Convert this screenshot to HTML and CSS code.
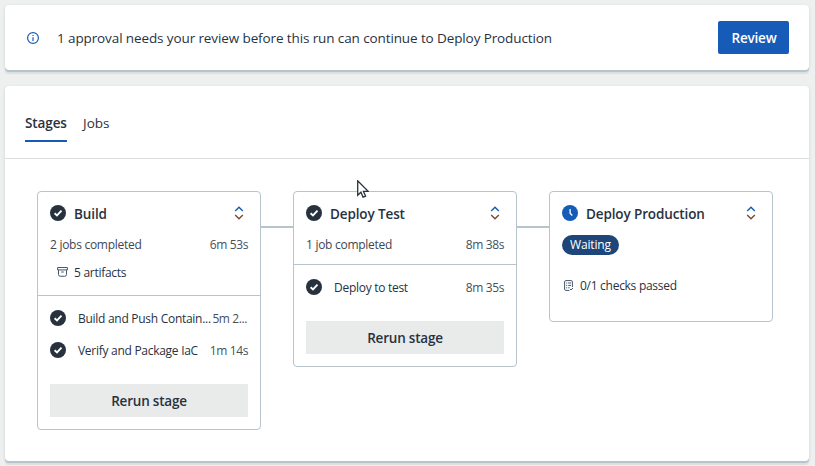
FILE: index.html
```html
<!DOCTYPE html>
<html lang="en">
<head>
<meta charset="utf-8">
<title>Pipeline run</title>
<link rel="stylesheet" href="styles.css">
</head>
<body>
<svg class="defs" width="0" height="0" aria-hidden="true">
  <symbol id="check" viewBox="0 0 16 16"><circle cx="8" cy="8" r="8" fill="#28323f"/><path d="M4.6 8.2 7 10.5 11.5 5.7" fill="none" stroke="#fff" stroke-width="1.9"/></symbol>
  <symbol id="expand" viewBox="0 0 10 14"><path d="M1.2 5 5 1.2 8.8 5" fill="none" stroke="#175bb8" stroke-width="1.4"/><path d="M1.2 9 5 12.8 8.8 9" fill="none" stroke="#7c4a35" stroke-width="1.4"/></symbol>
</svg>
<section class="banner">
  <svg class="info" viewBox="0 0 12 12"><circle cx="6" cy="6" r="5.4" fill="none" stroke="#175bb8" stroke-width="1.2"/><path d="M6 5.2V9M6 3v1.1" stroke="#175bb8" stroke-width="1.2"/></svg>
  <p class="message">1 approval needs your review before this run can continue to Deploy Production</p>
  <button class="review">Review</button>
</section>
<main class="panel">
  <nav class="tabs"><a class="tab active">Stages</a><a class="tab">Jobs</a></nav>
  <div class="stages">
    <article class="card build">
      <header><svg class="status"><use href="#check"/></svg><h2>Build</h2><svg class="toggle"><use href="#expand"/></svg></header>
      <div class="summary"><span class="jobs">2 jobs completed</span><span class="time">6m 53s</span></div>
      <div class="artifacts"><svg viewBox="0 0 12 11"><path d="M.6.6h10.8v2.6H.6zM1.6 3.2v5q0 2 2 2h4.8q2 0 2-2v-5M4.6 5.5h2.8" fill="none" stroke="#46566b" stroke-width="1.1"/></svg><span>5 artifacts</span></div>
      <div class="joblist">
        <div class="job"><svg class="status"><use href="#check"/></svg><span class="name">Build and Push Contain...</span><span class="time cut">5m 2...</span></div>
        <div class="job"><svg class="status"><use href="#check"/></svg><span class="name">Verify and Package IaC</span><span class="time">1m 14s</span></div>
        <button class="rerun">Rerun stage</button>
      </div>
    </article>
    <i class="link"></i>
    <article class="card test">
      <header><svg class="status"><use href="#check"/></svg><h2>Deploy Test</h2><svg class="toggle"><use href="#expand"/></svg></header>
      <div class="summary"><span class="jobs">1 job completed</span><span class="time">8m 38s</span></div>
      <div class="joblist">
        <div class="job"><svg class="status"><use href="#check"/></svg><span class="name">Deploy to test</span><span class="time">8m 35s</span></div>
        <button class="rerun">Rerun stage</button>
      </div>
    </article>
    <i class="link"></i>
    <article class="card production">
      <header><svg class="status" viewBox="0 0 16 16"><circle cx="8" cy="8" r="8" fill="#175bb8"/><path d="M8.1 4v4.3l2.2 2.2" fill="none" stroke="#fff" stroke-width="1.3"/></svg><h2>Deploy Production</h2><svg class="toggle"><use href="#expand"/></svg></header>
      <span class="badge">Waiting</span>
      <div class="checks"><svg viewBox="0 0 10 11"><path d="M8.4 7V1.8Q8.4.6 7.2.6H1.8Q.6.6.6 1.8v7.4q0 1.2 1.2 1.2h3.6M2.2 3h1M4.2 3h2.8M2.2 5.4h1M4.2 5.4h2.8M2.2 7.8h1M4.2 7.8h1.4M6 9l1 1L8.9 8" fill="none" stroke="#46566b" stroke-width="1"/></svg><span>0/1 checks passed</span></div>
    </article>
  </div>
</main>
<svg class="cursor" viewBox="0 0 12 18"><path d="M.7.8v14.4l3.2-3 2.2 5 2.5-1.1-2.2-4.8h4.8z" fill="#fff" stroke="#28323f" stroke-width="1.3"/></svg>
</body>
</html>
```

FILE: styles.css
```css
* { box-sizing: border-box; }
body {
  margin: 0; padding: 5px 6px 0 5px; height: 466px; overflow: hidden;
  background: #eeefef; color: #28323f;
  font: 13px/20px "Open Sans", "Noto Sans", sans-serif;
}
h2, p { margin: 0; }
svg { display: block; flex: none; }
.defs { position: absolute; }
span, p, h2 { white-space: nowrap; }
button { border: 0; padding: 0; color: inherit; font: 600 13.5px/20px "Open Sans", sans-serif; letter-spacing: -.2px; }
.banner, .panel {
  background: #fff; border-radius: 4px;
  box-shadow: 0 2px 0 #b7c4cb, 0 4px 1px #dcdfdf, 0 1px 3px #cbd3d5;
}
.banner { display: flex; align-items: center; height: 65px; padding: 0 20px 0 22px; }
.info { width: 12px; height: 12px; }
.message { margin-left: 18px; font-size: 13.5px; letter-spacing: -.11px; }
.review { width: 71px; height: 33px; margin-left: auto; padding-left: 1px; border-radius: 2px; background: #175bb8; color: #fff; }
.panel { height: 375px; margin-top: 16px; }
.tabs { display: flex; gap: 16px; height: 73px; padding: 27px 20px 0; border-bottom: 1px solid #dcdfe0; }
.tab { height: 29px; font-size: 13.5px; }
.tab.active { width: 42px; border-bottom: 2px solid #175bb8; font-weight: 600; letter-spacing: -.1px; }
.stages { display: flex; align-items: flex-start; padding: 32px 0 0 32px; }
.card { width: 224px; border: 1px solid #b7c4cb; border-radius: 4px; }
.build { height: 239px; }
.test { height: 176px; }
.production { height: 131px; }
.link { width: 32px; height: 2px; margin-top: 35px; background: #b7c4cb; }
header { display: flex; align-items: center; height: 20px; margin: 12px 12px 0; }
.status { width: 16px; height: 16px; margin-top: -2px; }
h2 { margin-left: 8px; font-size: 13.5px; font-weight: 600; line-height: 20px; letter-spacing: -.12px; }
.toggle { width: 10px; height: 14px; margin: -2px 4px 0 auto; }
.summary, .artifacts, .job, .checks { font-size: 12px; letter-spacing: -.28px; }
.summary { display: flex; justify-content: space-between; height: 20px; margin: 11px 12px 0; }
.time { letter-spacing: -.4px; color: #46505c; }
.jobs { color: #3d4753; }
.artifacts { display: flex; align-items: center; height: 20px; margin: 8px 0 0 19px; }
.artifacts svg { width: 11px; height: 10px; margin: -2px 6px 0 0; }
.joblist { margin-top: 9px; padding: 12px 12px 0; border-top: 1px solid #b7c4cb; }
.build .joblist { margin-top: 12px; }
.job { display: flex; align-items: center; height: 22px; }
.job + .job { margin-top: 10px; }
.job .name { margin-left: 12px; }
.job .time { margin-left: auto; }
.job .cut { margin-right: 1px; }
.rerun { display: block; width: 198px; height: 33px; margin-top: 22px; background: #e9eaea; }
.badge { display: block; width: 57px; height: 20px; margin: 11px 0 0 12px; border-radius: 10px; background: #1f4679; color: #fff; font-size: 12px; letter-spacing: -.15px; text-align: center; }
.checks { display: flex; align-items: center; height: 20px; margin: 21px 0 0 14px; }
.checks svg { width: 10px; height: 11px; margin: -1px 6px 0 0; }
.cursor { position: absolute; left: 357px; top: 180px; width: 12px; height: 18px; }
```
